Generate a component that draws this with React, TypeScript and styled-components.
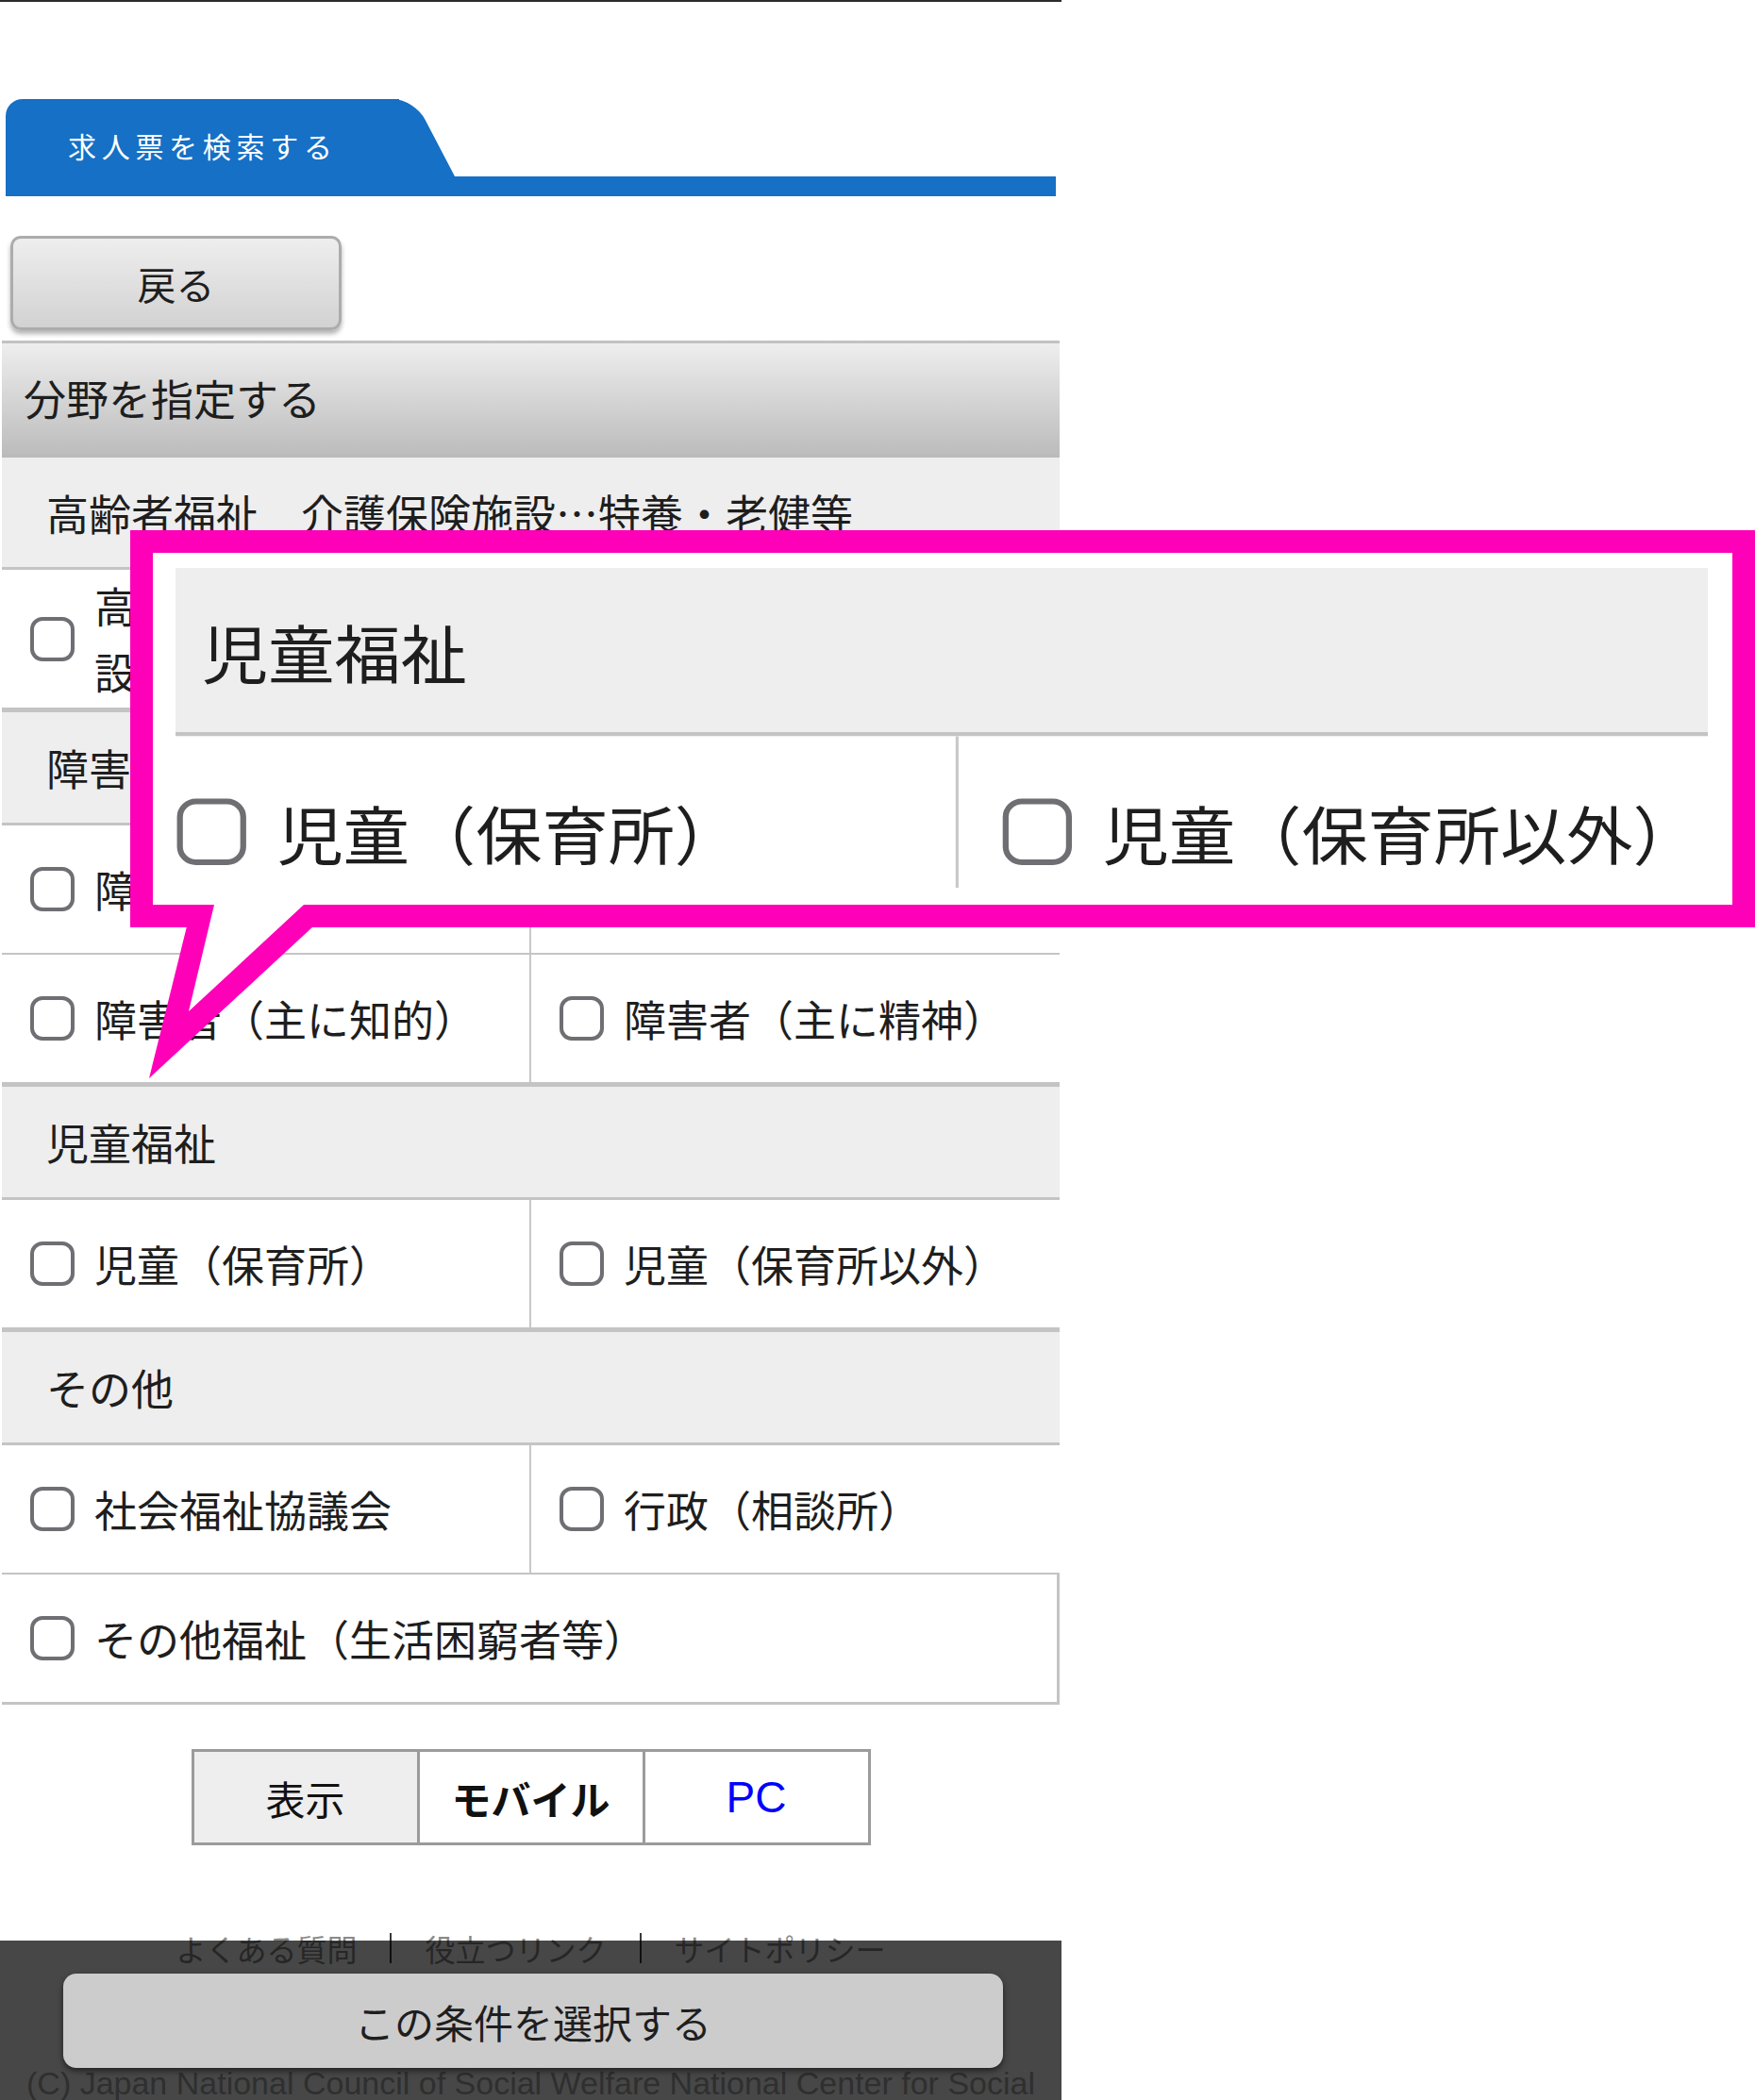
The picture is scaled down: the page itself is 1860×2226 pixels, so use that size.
import React from "react";
import styled, { createGlobalStyle } from "styled-components";

const GlobalStyle = createGlobalStyle`
  html, body { margin: 0; padding: 0; background: #fff; }
  body { font-family: "Noto Sans CJK JP", "Noto Sans", sans-serif; color: #1e1e1e; }
  * { box-sizing: border-box; }
`;

const BLUE = "#1570c6";
const LINE = "#c4c4c4";
const PINK = "#ff00b9";

const Screen = styled.div`
  position: relative;
  width: 1860px;
  height: 2226px;
  overflow: hidden;
  background: #fff;
`;

const Page = styled.div`
  width: 1125px;
  border-top: 2px solid #2c2c2c;
  display: flex;
  flex-direction: column;
`;

const TabArea = styled.div`
  margin: 103px 0 0 6px;
  display: flex;
  flex-direction: column;
`;

const Tab = styled.div`
  position: relative;
  width: 417px;
  height: 82px;
  padding: 16px 0 0 66px;
  display: flex;
  align-items: center;
  background: ${BLUE};
  border-top-left-radius: 18px;
  color: #fff;
  font-size: 30px;
  letter-spacing: 5.7px;
  &::after {
    content: "";
    position: absolute;
    top: 0;
    left: 374px;
    width: 102px;
    height: 100%;
    background: ${BLUE};
    border-top-right-radius: 22px;
    transform: skewX(27.6deg);
    transform-origin: left bottom;
  }
`;

const TabBar = styled.div`
  height: 21px;
  width: 1113px;
  background: ${BLUE};
`;

const BackButton = styled.button`
  align-self: flex-start;
  margin: 42px 0 0 11px;
  width: 351px;
  height: 100px;
  padding: 0;
  border: 3px solid #acacac;
  border-radius: 11px;
  background: linear-gradient(#eeeeee, #d2d2d2);
  box-shadow: 0 4px 5px rgba(0, 0, 0, 0.3);
  font-family: inherit;
  font-size: 41px;
  color: #1e1e1e;
`;

const FieldList = styled.div`
  margin: 11px 2px 0;
  display: flex;
  flex-direction: column;
`;

const TitleHeader = styled.div`
  height: 124px;
  padding: 0 0 4px 23px;
  display: flex;
  align-items: center;
  border-top: 3px solid #c2c2c2;
  border-bottom: 3px solid #bababa;
  background: linear-gradient(#eeeeee, #bcbcbc);
  font-size: 45px;
  color: #1e1e1e;
`;

const CategoryHeader = styled.div<{ $first?: boolean }>`
  height: ${(p) => (p.$first ? 119 : 123)}px;
  padding-left: 47px;
  display: flex;
  align-items: center;
  background: #eeeeee;
  border-top: ${(p) => (p.$first ? "none" : `3px solid ${LINE}`)};
  border-bottom: 3px solid ${LINE};
  font-size: 45px;
  color: #1e1e1e;
`;

const OptionRow = styled.div<{ $single?: boolean }>`
  display: grid;
  grid-template-columns: ${(p) => (p.$single ? "1fr" : "561px 1fr")};
  border-bottom: ${(p) => (p.$single ? 3 : 2)}px solid ${LINE};
  border-right: ${(p) => (p.$single ? `3px solid ${LINE}` : "none")};
  background: #fff;
`;

const OptionCell = styled.label<{ $divider?: boolean }>`
  display: flex;
  align-items: center;
  min-height: 135px;
  padding: 3px 16px 3px 30px;
  border-right: ${(p) => (p.$divider ? "2px solid #c8c8c8" : "none")};
`;

const Checkbox = styled.span`
  flex-shrink: 0;
  width: 47px;
  height: 47px;
  margin-right: 21px;
  border: 4px solid #6e6e73;
  border-radius: 13px;
  background: #fff;
`;

const OptionText = styled.span`
  font-size: 45px;
  line-height: 70px;
  color: #1e1e1e;
`;

const ViewToggle = styled.div`
  align-self: center;
  display: flex;
  margin-top: 47px;
  border: 3px solid #9b9b9b;
`;

const ToggleCell = styled.div<{ $kind: "label" | "current" | "link" }>`
  width: 239px;
  height: 96px;
  display: flex;
  align-items: center;
  justify-content: center;
  font-size: ${(p) => (p.$kind === "link" ? 46 : 42)}px;
  background: ${(p) => (p.$kind === "label" ? "#eeeeee" : "#fff")};
  font-weight: ${(p) => (p.$kind === "current" ? 700 : 400)};
  color: ${(p) => (p.$kind === "link" ? "#0000ff" : "#111")};
  font-family: ${(p) =>
    p.$kind === "link" ? `"Liberation Sans", Arial, sans-serif` : "inherit"};
  &:first-child {
    width: 236px;
  }
  & + & {
    border-left: 3px solid #9b9b9b;
  }
`;

const FooterLinks = styled.div`
  align-self: center;
  display: flex;
  margin-top: 93px;
  font-size: 32px;
  line-height: 32px;
  color: #8a8a8a;
`;

const FooterLink = styled.span`
  padding: 0 35px;
  &:first-child {
    padding-left: 0;
  }
  &:last-child {
    padding-right: 0;
  }
  & + & {
    border-left: 2px solid #3a3a3a;
  }
`;

const Copyright = styled.p`
  margin: 107px 0 0;
  padding: 0 4px;
  font-family: "Liberation Sans", Arial, sans-serif;
  font-size: 34px;
  line-height: 40px;
  color: #a8a8a8;
  text-align: center;
`;

const ActionBar = styled.div`
  position: absolute;
  left: 0;
  bottom: 0;
  width: 1125px;
  height: 169px;
  padding: 35px 0 0 67px;
  background: rgba(0, 0, 0, 0.72);
  display: flex;
  align-items: flex-start;
`;

const ActionButton = styled.button`
  width: 996px;
  height: 100px;
  padding: 0;
  border: none;
  border-radius: 14px;
  background: #cccccc;
  box-shadow: 0 3px 6px rgba(0, 0, 0, 0.55);
  font-family: inherit;
  font-size: 42px;
  color: #1e1e1e;
`;

const Callout = styled.div`
  position: absolute;
  left: 138px;
  top: 562px;
  width: 1722px;
  height: 421px;
  border: 24px solid ${PINK};
  background: #fff;
  padding: 16px 26px 18px 24px;
  z-index: 5;
`;

const CropWindow = styled.div`
  width: 1624px;
  height: 339px;
  overflow: hidden;
`;

const ZoomedContent = styled.div`
  width: 1121px;
  transform-origin: 0 0;
  transform: scale(1.56, 1.5) translateX(-29px);
`;

const Tail = styled.svg`
  position: absolute;
  left: 150px;
  top: 955px;
  z-index: 6;
`;

type Row = string[];
type Group = { title: string; rows: Row[] };

const groups: Group[] = [
  {
    title: "高齢者福祉　介護保険施設…特養・老健等",
    rows: [["高齢者（介護保険施設…特養・老健等）", "高齢者（介護保険施設以外）"]],
  },
  {
    title: "障害者福祉",
    rows: [
      ["障害者（主に身体）", "障害者（その他）"],
      ["障害者（主に知的）", "障害者（主に精神）"],
    ],
  },
  {
    title: "児童福祉",
    rows: [["児童（保育所）", "児童（保育所以外）"]],
  },
  {
    title: "その他",
    rows: [["社会福祉協議会", "行政（相談所）"], ["その他福祉（生活困窮者等）"]],
  },
];

function Options({ row }: { row: Row }) {
  const single = row.length === 1;
  return (
    <OptionRow $single={single}>
      {row.map((text, i) => (
        <OptionCell key={text} $divider={!single && i === 0}>
          <Checkbox />
          <OptionText>{text}</OptionText>
        </OptionCell>
      ))}
    </OptionRow>
  );
}

export default function App() {
  const child = groups[2];
  return (
    <>
      <GlobalStyle />
      <Screen>
        <Page>
          <TabArea>
            <Tab>求人票を検索する</Tab>
            <TabBar />
          </TabArea>
          <BackButton>戻る</BackButton>
          <FieldList>
            <TitleHeader>分野を指定する</TitleHeader>
            {groups.map((g, gi) => (
              <React.Fragment key={g.title}>
                <CategoryHeader $first={gi === 0}>{g.title}</CategoryHeader>
                {g.rows.map((r) => (
                  <Options key={r.join()} row={r} />
                ))}
              </React.Fragment>
            ))}
          </FieldList>
          <ViewToggle>
            <ToggleCell $kind="label">表示</ToggleCell>
            <ToggleCell $kind="current">モバイル</ToggleCell>
            <ToggleCell $kind="link">PC</ToggleCell>
          </ViewToggle>
          <FooterLinks>
            <FooterLink>よくある質問</FooterLink>
            <FooterLink>役立つリンク</FooterLink>
            <FooterLink>サイトポリシー</FooterLink>
          </FooterLinks>
          <Copyright>
            (C) Japan National Council of Social Welfare National Center for Social Work
          </Copyright>
        </Page>

        <ActionBar>
          <ActionButton>この条件を選択する</ActionButton>
        </ActionBar>

        <Callout>
          <CropWindow>
            <ZoomedContent>
              <CategoryHeader $first>{child.title}</CategoryHeader>
              <Options row={child.rows[0]} />
            </ZoomedContent>
          </CropWindow>
        </Callout>
        <Tail width="190" height="195" viewBox="150 955 190 195">
          <polygon points="198,982 158,1143 332,982" fill={PINK} />
          <polygon points="227,959 200,1072 322,959" fill="#fff" />
        </Tail>
      </Screen>
    </>
  );
}
